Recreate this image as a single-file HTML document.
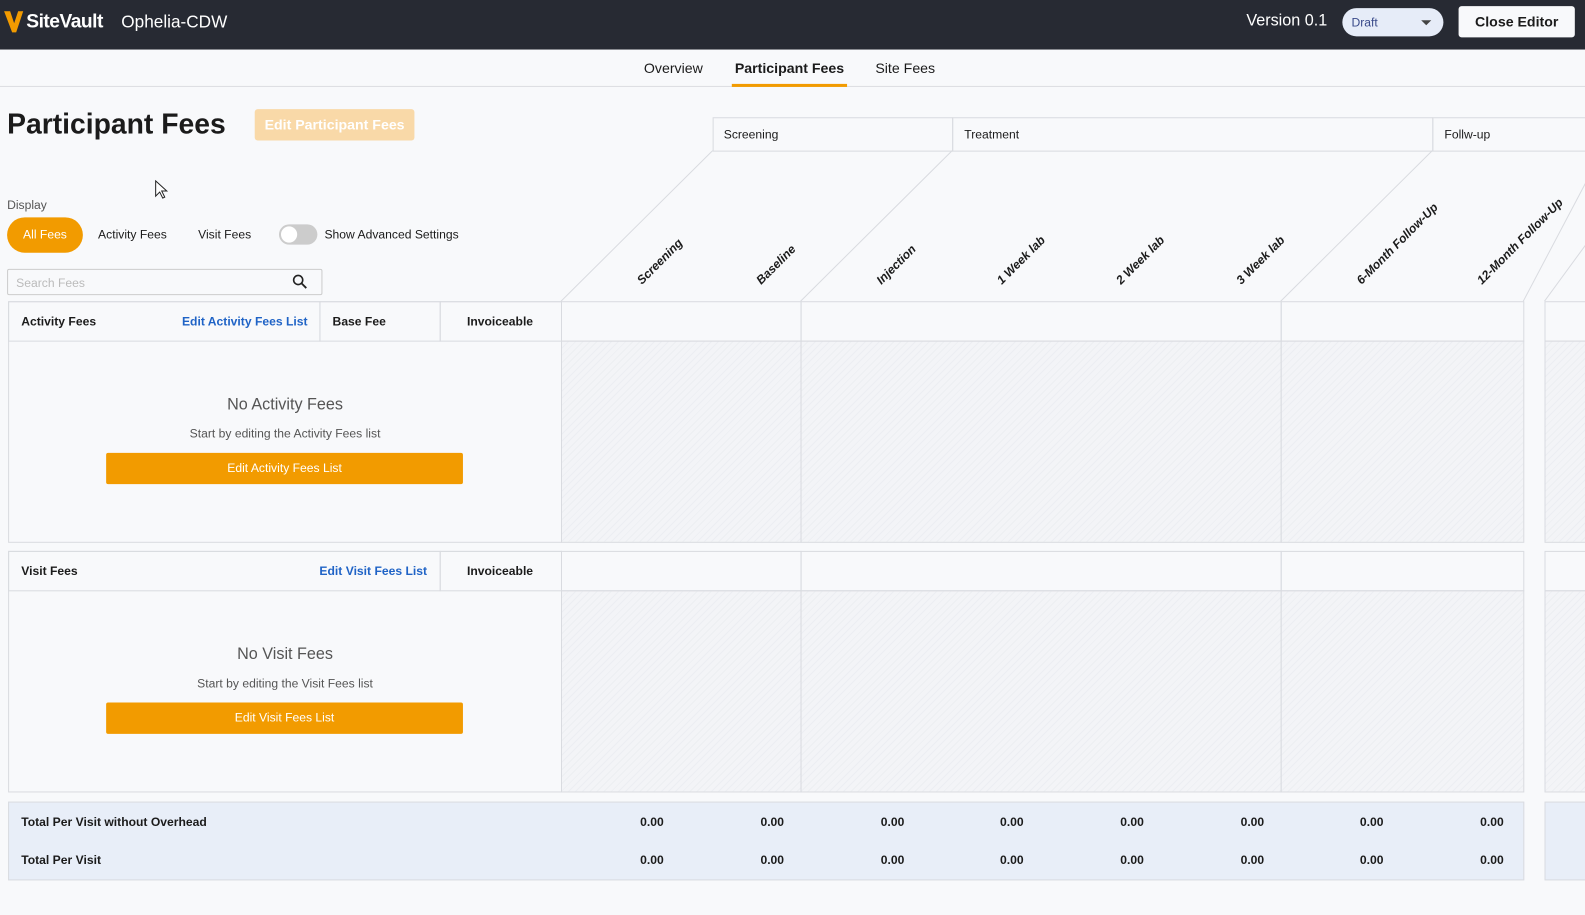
<!DOCTYPE html>
<html><head><meta charset="utf-8"><style>
*{box-sizing:border-box;margin:0;padding:0}
body{width:1585px;height:915px;background:#f8f9fb;font-family:"Liberation Sans",Arial,sans-serif;color:#1b1b1b;position:relative;overflow:hidden}
#w{position:absolute;left:0;top:0;width:1568px;height:905px;transform:scale(1.0108);transform-origin:0 0}
.abs{position:absolute}
.hdr{left:0;top:0;width:1585px;height:49px;background:#272a33}
.cell{position:absolute;border:1px solid #d9dbe0}
.hatch{background:repeating-linear-gradient(135deg,#f3f4f7 0 4px,#eceef2 4px 5px)}
.btn{position:absolute;background:#f29b00;color:#fff;font-size:12px;text-align:center;line-height:31px;border-radius:2px}
.b{font-weight:bold;font-size:12px}
</style></head><body><div id="w">
<div class="abs hdr"></div>
<svg class="abs" style="left:4px;top:11px" width="20" height="22" viewBox="0 0 20 22"><path d="M0 0h6l4 12 4-12h5l-7 21h-4z" fill="#f29b00"/></svg>
<div class="abs" style="left:26px;top:11px;color:#fff;font-size:19px;font-weight:bold;letter-spacing:-0.5px">SiteVault</div>
<div class="abs" style="left:120px;top:12px;color:#fff;font-size:17px">Ophelia-CDW</div>
<div class="abs" style="left:1233px;top:12px;color:#fff;font-size:16px">Version 0.1</div>
<div class="abs" style="left:1328px;top:8px;width:100px;height:28px;background:#e6ecf8;border-radius:14px;color:#3a4a8a;font-size:12px;padding:7px 0 0 9px">Draft<span style="position:absolute;right:12px;top:12px;border:5px solid transparent;border-top:5px solid #444;border-bottom:0"></span></div>
<div class="abs" style="left:1443px;top:6px;width:115px;height:31px;background:#f8f9fb;border-radius:3px;font-weight:bold;font-size:14px;text-align:center;line-height:31px">Close Editor</div>
<div class="abs" style="left:0;top:85px;width:1585px;height:1px;background:#dcdde1"></div>
<div class="abs" style="left:637px;top:59px;font-size:14px">Overview</div>
<div class="abs" style="left:727px;top:59px;font-size:14px;font-weight:bold">Participant Fees</div>
<div class="abs" style="left:724px;top:83px;width:114px;height:3px;background:#f29b00"></div>
<div class="abs" style="left:866px;top:59px;font-size:14px">Site Fees</div>
<div class="abs" style="left:7px;top:107px;font-size:28px;font-weight:bold">Participant Fees</div>
<div class="abs" style="left:252px;top:108px;width:158px;height:31px;background:#f9d9a8;color:#fff;border-radius:3px;font-weight:bold;font-size:14px;text-align:center;line-height:31px">Edit Participant Fees</div>
<div class="abs" style="left:7px;top:196px;font-size:12px;color:#555">Display</div>
<div class="abs" style="left:7px;top:215px;width:75px;height:35px;background:#f29b00;border-radius:18px;color:#fff;font-size:12px;text-align:center;line-height:35px">All Fees</div>
<div class="abs" style="left:97px;top:225px;font-size:12px">Activity Fees</div>
<div class="abs" style="left:196px;top:225px;font-size:12px">Visit Fees</div>
<div class="abs" style="left:276px;top:222px;width:38px;height:20px;background:#ccc;border-radius:10px"><div style="position:absolute;left:2px;top:2px;width:16px;height:16px;border-radius:8px;background:#fff"></div></div>
<div class="abs" style="left:321px;top:225px;font-size:12px">Show Advanced Settings</div>
<div class="abs" style="left:7px;top:266px;width:312px;height:26px;border:1px solid #ccc;border-radius:2px;background:#f8f9fb;font-size:12px;color:#bbb;padding:6px 8px">Search Fees</div>
<svg class="abs" style="left:289px;top:271px" width="15" height="15"><circle cx="6" cy="6" r="4.5" fill="none" stroke="#222" stroke-width="1.6"/><path d="M9.5 9.5 14 14" stroke="#222" stroke-width="1.8"/></svg>

<div class="cell" style="left:705px;top:116px;width:238px;height:34px;font-size:12px;padding:9px 10px">Screening</div>
<div class="cell" style="left:942px;top:116px;width:476px;height:34px;font-size:12px;padding:9px 11px">Treatment</div>
<div class="cell" style="left:1417px;top:116px;width:180px;height:34px;font-size:12px;padding:9px 11px">Follw-up</div>
<svg class="abs" style="left:0;top:0" width="1585" height="300">
<g stroke="#d9dbe0" fill="none"><path d="M705 149 555 298M942 149 792 298M1417 149 1267 298M1585 150 1507 298M1585 220 1528 298"/></g>
<g font-size="12" font-weight="bold" fill="#1b1b1b" font-style="italic">
<text transform="translate(635,282) rotate(-45)">Screening</text>
<text transform="translate(753,282) rotate(-45)">Baseline</text>
<text transform="translate(872,282) rotate(-45)">Injection</text>
<text transform="translate(991,282) rotate(-45)">1 Week lab</text>
<text transform="translate(1109,282) rotate(-45)">2 Week lab</text>
<text transform="translate(1228,282) rotate(-45)">3 Week lab</text>
<text transform="translate(1347,282) rotate(-45)">6-Month Follow-Up</text>
<text transform="translate(1466,282) rotate(-45)">12-Month Follow-Up</text>
</g></svg>

<div class="cell" style="left:8px;top:298px;width:548px;height:239px"></div>
<div class="cell" style="left:8px;top:298px;width:309px;height:40px"></div>
<div class="cell" style="left:316px;top:298px;width:120px;height:40px"></div>
<div class="cell" style="left:435px;top:298px;width:121px;height:40px"></div>
<div class="abs b" style="left:21px;top:311px">Activity Fees</div>
<div class="abs b" style="left:180px;top:311px;color:#1f63c6">Edit Activity Fees List</div>
<div class="abs b" style="left:329px;top:311px">Base Fee</div>
<div class="abs b" style="left:462px;top:311px">Invoiceable</div>
<div class="abs" style="left:8px;top:392px;width:548px;text-align:center;font-size:16px;color:#555">No Activity Fees</div>
<div class="abs" style="left:8px;top:422px;width:548px;text-align:center;font-size:12px;color:#555">Start by editing the Activity Fees list</div>
<div class="btn" style="left:105px;top:448px;width:353px">Edit Activity Fees List</div>

<div class="cell" style="left:8px;top:545px;width:548px;height:239px"></div>
<div class="cell" style="left:8px;top:545px;width:428px;height:40px"></div>
<div class="cell" style="left:435px;top:545px;width:121px;height:40px"></div>
<div class="abs b" style="left:21px;top:558px">Visit Fees</div>
<div class="abs b" style="left:316px;top:558px;color:#1f63c6">Edit Visit Fees List</div>
<div class="abs b" style="left:462px;top:558px">Invoiceable</div>
<div class="abs" style="left:8px;top:639px;width:548px;text-align:center;font-size:16px;color:#555">No Visit Fees</div>
<div class="abs" style="left:8px;top:669px;width:548px;text-align:center;font-size:12px;color:#555">Start by editing the Visit Fees list</div>
<div class="btn" style="left:105px;top:695px;width:353px">Edit Visit Fees List</div>

<div class="cell" style="left:555px;top:298px;width:238px;height:40px"></div>
<div class="cell" style="left:792px;top:298px;width:476px;height:40px"></div>
<div class="cell" style="left:1267px;top:298px;width:241px;height:40px"></div>
<div class="cell" style="left:1528px;top:298px;width:70px;height:40px"></div>
<div class="cell hatch" style="left:555px;top:337px;width:238px;height:200px"></div>
<div class="cell hatch" style="left:792px;top:337px;width:476px;height:200px"></div>
<div class="cell hatch" style="left:1267px;top:337px;width:241px;height:200px"></div>
<div class="cell hatch" style="left:1528px;top:337px;width:70px;height:200px"></div>
<div class="cell" style="left:555px;top:545px;width:238px;height:40px"></div>
<div class="cell" style="left:792px;top:545px;width:476px;height:40px"></div>
<div class="cell" style="left:1267px;top:545px;width:241px;height:40px"></div>
<div class="cell" style="left:1528px;top:545px;width:70px;height:40px"></div>
<div class="cell hatch" style="left:555px;top:584px;width:238px;height:200px"></div>
<div class="cell hatch" style="left:792px;top:584px;width:476px;height:200px"></div>
<div class="cell hatch" style="left:1267px;top:584px;width:241px;height:200px"></div>
<div class="cell hatch" style="left:1528px;top:584px;width:70px;height:200px"></div>

<div class="cell" style="left:8px;top:793px;width:1500px;height:78px;background:#e8eef8"></div>
<div class="cell" style="left:1528px;top:793px;width:70px;height:78px;background:#e8eef8"></div>
<div class="abs b" style="left:21px;top:806px">Total Per Visit without Overhead</div>
<div class="abs b" style="left:21px;top:844px">Total Per Visit</div>
<svg class="abs" style="left:0;top:790px" width="1585" height="80"><g font-size="12" font-weight="bold" text-anchor="middle" fill="#1b1b1b">
<text x="645" y="27">0.00</text><text x="764" y="27">0.00</text><text x="883" y="27">0.00</text><text x="1001" y="27">0.00</text><text x="1120" y="27">0.00</text><text x="1239" y="27">0.00</text><text x="1357" y="27">0.00</text><text x="1476" y="27">0.00</text>
<text x="645" y="65">0.00</text><text x="764" y="65">0.00</text><text x="883" y="65">0.00</text><text x="1001" y="65">0.00</text><text x="1120" y="65">0.00</text><text x="1239" y="65">0.00</text><text x="1357" y="65">0.00</text><text x="1476" y="65">0.00</text>
</g></svg>
<svg class="abs" style="left:153px;top:178px" width="14" height="20"><path d="M1 1v15l4-4 3 6 2-1-3-6h5z" fill="#fff" stroke="#222"/></svg>
</div></body></html>
